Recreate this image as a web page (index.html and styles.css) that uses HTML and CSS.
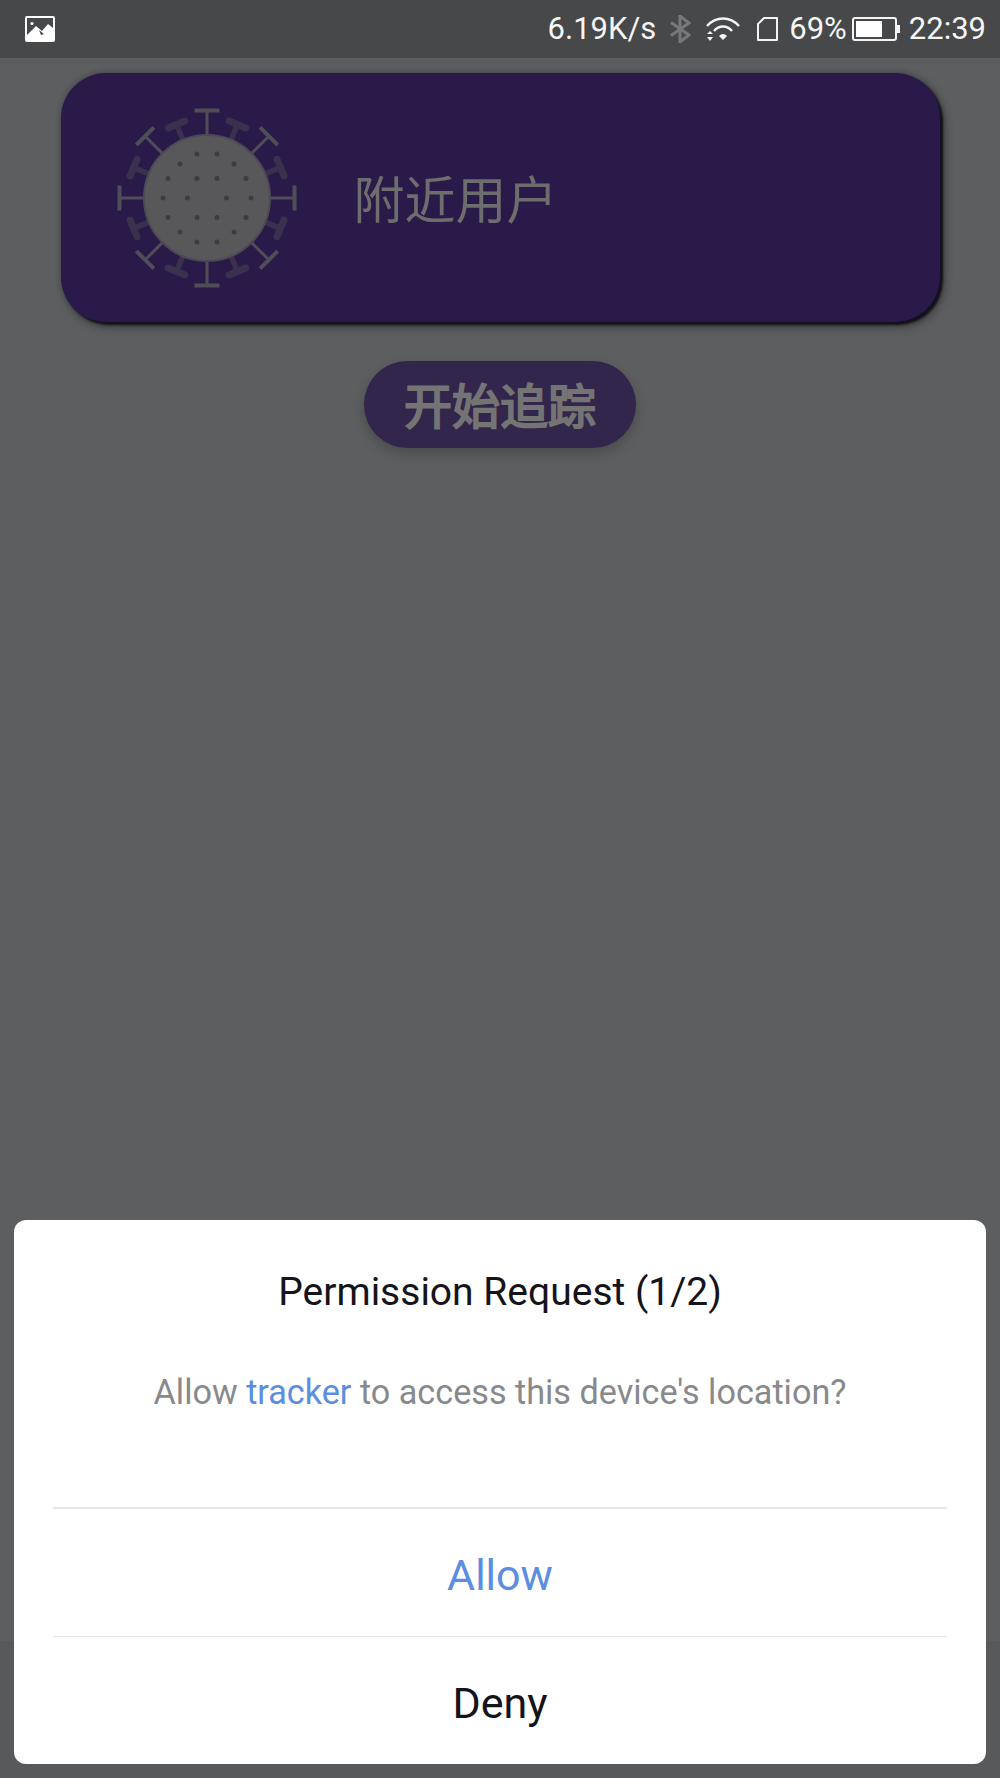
FILE: index.html
```html
<!DOCTYPE html>
<html lang="en">
<head>
    <meta charset="UTF-8">
    <meta name="viewport" content="width=device-width, initial-scale=1.0">
    <title>Tracker</title>
    <link rel="stylesheet" href="styles.css">
</head>
<body>

    <!-- Status bar -->
    <header class="status-bar">
        <svg class="icon-picture" width="30" height="26" viewBox="0 0 30 26">
            <rect x="1" y="1" width="28" height="24" rx="1" fill="#47484a" stroke="#ffffff" stroke-width="2"/>
            <circle cx="7" cy="7.500" r="1.600" fill="#ffffff"/>
            <path d="M2 23 V19 L11 10 L17 15 L23 8 L28 12 V24 H2 Z" fill="#ffffff"/>
            <path d="M14 14 L19 18 L16 19 Z" fill="#47484a"/>
        </svg>
        <div class="status-right">
            <span class="status-text">6.19K/s</span>
            <svg class="icon-bt" width="22" height="28" viewBox="0 0 22 28">
                <path d="M2 7.500 L20 20 L11 27 V1 L20 8 L2 20.500" fill="none" stroke="#77787a" stroke-width="3"/>
            </svg>
            <svg class="icon-wifi" width="36" height="25" viewBox="0 0 36 25">
                <path d="M2 9 C11 -1 25 -1 34 9" fill="none" stroke="#f4f4f4" stroke-width="2.400"/>
                <path d="M9 14 C14 8 22 8 27 14" fill="none" stroke="#f4f4f4" stroke-width="2.400"/>
                <path d="M14 19 Q18 15 22 19 L18 23 Z" fill="#f4f4f4"/>
                <path d="M5 14 L8 17 H2 Z M2 20 H8 L5 24 Z" fill="#f4f4f4"/>
            </svg>
            <svg class="icon-sd" width="21" height="24" viewBox="0 0 21 24">
                <path d="M7 1 H20 V23 H1 V7 Z" fill="none" stroke="#f4f4f4" stroke-width="2" stroke-linejoin="round"/>
            </svg>
            <span class="status-text status-percent">69%</span>
            <svg class="icon-battery" width="48" height="24" viewBox="0 0 48 24">
                <rect x="1" y="1" width="43" height="22" rx="2" fill="none" stroke="#f4f4f4" stroke-width="2"/>
                <rect x="4" y="4" width="26" height="16" fill="#ffffff"/>
                <rect x="45" y="8" width="3" height="8" fill="#f4f4f4"/>
            </svg>
            <span class="status-text">22:39</span>
        </div>
    </header>

    <main class="content">
        <section class="nearby-card">
            <svg class="virus" width="182" height="182" viewBox="-91 -91 182 182">
                <defs>
                    <g id="spike-thin">
                        <path d="M0 -62 V-86" fill="none" stroke="#4f4d57" stroke-width="3"/>
                        <path d="M-12.500 -87.500 H12.500" fill="none" stroke="#4f4d57" stroke-width="4"/>
                    </g>
                    <g id="spike-thick">
                        <path d="M0 -62 V-78" fill="none" stroke="#39314e" stroke-width="5.500"/>
                        <path d="M-9 -79.500 H9" fill="none" stroke="#39314e" stroke-width="7" stroke-linecap="round"/>
                    </g>
                </defs>
                <use href="#spike-thin"/>
                <use href="#spike-thin" transform="rotate(45)"/>
                <use href="#spike-thin" transform="rotate(90)"/>
                <use href="#spike-thin" transform="rotate(135)"/>
                <use href="#spike-thin" transform="rotate(180)"/>
                <use href="#spike-thin" transform="rotate(225)"/>
                <use href="#spike-thin" transform="rotate(270)"/>
                <use href="#spike-thin" transform="rotate(315)"/>
                <use href="#spike-thick" transform="rotate(22.500)"/>
                <use href="#spike-thick" transform="rotate(67.500)"/>
                <use href="#spike-thick" transform="rotate(112.500)"/>
                <use href="#spike-thick" transform="rotate(157.500)"/>
                <use href="#spike-thick" transform="rotate(202.500)"/>
                <use href="#spike-thick" transform="rotate(247.500)"/>
                <use href="#spike-thick" transform="rotate(292.500)"/>
                <use href="#spike-thick" transform="rotate(337.500)"/>
                <circle r="63" fill="#58585b" stroke="#4c4a55" stroke-width="2"/>
                <g fill="#3e3b46">
                    <circle cx="-10" cy="-44" r="2.500"/><circle cx="10" cy="-44" r="2.500"/>
                    <circle cx="-27" cy="-34" r="2.500"/><circle cx="27" cy="-34" r="2.500"/>
                    <circle cx="-39" cy="-19.500" r="2.500"/><circle cx="-10" cy="-19.500" r="2.500"/><circle cx="10" cy="-19.500" r="2.500"/><circle cx="39" cy="-19.500" r="2.500"/>
                    <circle cx="-44" cy="0" r="2.500"/><circle cx="-19.500" cy="0" r="2.500"/><circle cx="19.500" cy="0" r="2.500"/><circle cx="44" cy="0" r="2.500"/>
                    <circle cx="-39" cy="19.500" r="2.500"/><circle cx="-10" cy="19.500" r="2.500"/><circle cx="10" cy="19.500" r="2.500"/><circle cx="39" cy="19.500" r="2.500"/>
                    <circle cx="-27" cy="34" r="2.500"/><circle cx="27" cy="34" r="2.500"/>
                    <circle cx="-10" cy="44" r="2.500"/><circle cx="10" cy="44" r="2.500"/>
                </g>
            </svg>
            <span class="nearby-label">附近用户</span>
        </section>

        <button class="track-button">开始追踪</button>
    </main>

    <div class="bottom-band"></div>

    <!-- Permission dialog -->
    <div class="overlay">
        <div class="dialog">
            <h2 class="dialog-title">Permission Request (1/2)</h2>
            <p class="dialog-message">Allow <span class="app-name">tracker</span> to access this device's location?</p>
            <div class="dialog-action action-allow">Allow</div>
            <div class="dialog-action action-deny">Deny</div>
        </div>
    </div>

</body>
</html>
```

FILE: styles.css
```css
/* General Page Styling */
html, body {
    height: 100%;
}

body {
    position: relative;
    margin: 0;
    height: 1778px;
    overflow: hidden;
    display: flex;
    flex-direction: column;
    background-color: #5d5e60;
    font-family: Roboto, 'Noto Sans CJK SC', sans-serif;
}

/* Status Bar */
.status-bar {
    height: 58px;
    flex-shrink: 0;
    display: flex;
    align-items: center;
    justify-content: space-between;
    padding: 0 14px 0 25px;
    background-color: #47484a;
}

.status-right {
    display: flex;
    align-items: center;
}

.status-text {
    font-size: 31px;
    color: #f6f6f6;
    line-height: 58px;
}

.icon-bt {
    margin-left: 13px;
}

.icon-wifi {
    margin-left: 14px;
}

.icon-sd {
    margin-left: 16px;
}

.status-percent {
    margin-left: 11px;
}

.icon-battery {
    margin: 0 9px 0 5px;
}

/* Main Content */
.content {
    flex: 1;
    display: flex;
    flex-direction: column;
    align-items: center;
    padding-top: 15px;
}

.nearby-card {
    width: 879px;
    height: 249px;
    display: flex;
    align-items: center;
    gap: 56px;
    padding-left: 55px;
    box-sizing: border-box;
    background-color: #2a1a49;
    border-radius: 45px;
    box-shadow: 3px 3px 2px rgba(15, 12, 25, 0.9), 4px 5px 10px rgba(0, 0, 0, 0.4), 0 -1px 6px rgba(0, 0, 0, 0.2);
}

.nearby-label {
    padding-bottom: 2px;
    font-size: 51px;
    color: #6d6d6e;
    font-family: 'Noto Sans CJK SC', sans-serif;
}

.track-button {
    width: 272px;
    height: 87px;
    margin-top: 39px;
    border: none;
    border-radius: 44px;
    background-color: #32264c;
    color: #747474;
    font-family: 'Noto Sans CJK SC', sans-serif;
    font-size: 48px;
    font-weight: 400;
    -webkit-text-stroke: 2px #747474;
    padding: 0 0 4px;
    box-shadow: 0 5px 12px rgba(0, 0, 0, 0.22);
}

/* Slightly darker strip behind the bottom of the dialog */
.bottom-band {
    height: 137px;
    flex-shrink: 0;
    background-color: #58595b;
}

/* Permission Dialog */
.overlay {
    position: absolute;
    inset: 0;
    display: flex;
    flex-direction: column;
    justify-content: flex-end;
    padding: 0 14px 14px;
}

.dialog {
    padding: 50px 39px 0;
    background-color: #ffffff;
    border-radius: 12px;
    text-align: center;
}

.dialog-title {
    margin: 0;
    font-size: 39px;
    font-weight: 400;
    line-height: 44px;
    color: #14141a;
}

.dialog-message {
    margin: 58px 0 95px;
    font-size: 34.200px;
    line-height: 40px;
    color: #88898b;
}

.app-name {
    color: #5b8de0;
}

.dialog-action {
    height: 127px;
    line-height: 133px;
    font-size: 43px;
    border-top: 2px solid #e6e6e8;
}

.action-allow {
    color: #5b8de0;
}

.action-deny {
    border-top: 1px solid #e8e8ea;
    color: #14141a;
}
```
